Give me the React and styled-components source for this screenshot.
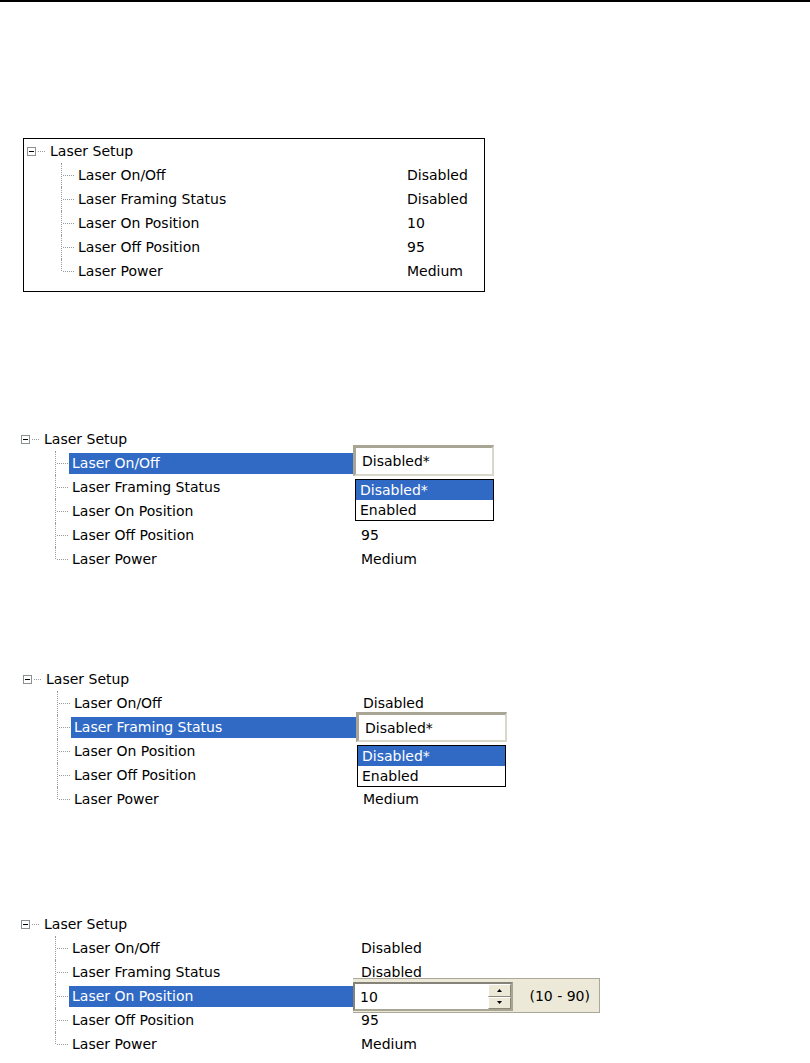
import React from "react";
import styled, { createGlobalStyle } from "styled-components";

const GlobalStyle = createGlobalStyle`
    html, body {
        margin: 0;
        padding: 0;
        background: #ffffff;
    }
    body {
        font-family: "DejaVu Sans", Verdana, sans-serif;
        font-size: 14px;
        color: #000000;
    }
`;

const Page = styled.div`
    width: 810px;
    min-height: 1063px;
    box-sizing: border-box;
    border-top: 2px solid #000000;
    display: flex;
    flex-direction: column;
    align-items: flex-start;
`;

const Section = styled.section`
    margin-top: ${({ $top }) => $top}px;
    margin-left: ${({ $left }) => $left}px;
`;

const FramedSection = styled(Section)`
    width: 462px;
    box-sizing: border-box;
    border: 1px solid #000000;
    padding: 1px 0 8px 3px;
`;

const HeaderRow = styled.div`
    display: flex;
    align-items: center;
    height: 23px;
`;

const MinusBox = styled.span`
    position: relative;
    width: 9px;
    height: 9px;
    box-sizing: border-box;
    border: 1px solid #8a8f92;
    background: #ffffff;

    &::after {
        content: "";
        position: absolute;
        left: 1px;
        top: 3px;
        width: 5px;
        height: 1px;
        background: #000000;
    }
`;

const HeaderDots = styled.span`
    width: 7px;
    margin-left: 2px;
    border-top: 1px dotted #9a9a9a;
`;

const HeaderLabel = styled.span`
    margin-left: 5px;
    line-height: 23px;
`;

const Children = styled.div`
    display: flex;
    flex-direction: column;
`;

const ChildRow = styled.div`
    display: grid;
    grid-template-columns: 48px ${({ $valueAt }) => $valueAt - 48}px 1fr;
    align-items: center;
    height: 24px;
`;

const Connector = styled.span`
    position: relative;
    align-self: stretch;

    &::before {
        content: "";
        position: absolute;
        left: 34px;
        top: 0;
        bottom: ${({ $last }) => ($last ? "12px" : "0")};
        border-left: 1px dotted #9a9a9a;
    }

    &::after {
        content: "";
        position: absolute;
        left: 36px;
        width: 11px;
        top: 12px;
        border-top: 1px dotted #9a9a9a;
    }
`;

const NameCell = styled.span`
    height: 21px;
    line-height: 21px;
    padding-left: 3px;
    white-space: nowrap;
    background: ${({ $selected }) => ($selected ? "#316ac5" : "transparent")};
    color: ${({ $selected }) => ($selected ? "#ffffff" : "#000000")};
`;

const ValueCell = styled.span`
    position: relative;
    height: 24px;
    line-height: 24px;
    padding-left: 7px;
    white-space: nowrap;
`;

/* combo box editor */
const ComboEdit = styled.div`
    position: absolute;
    z-index: 2;
    top: ${({ $top }) => $top}px;
    left: ${({ $left }) => $left}px;
    width: ${({ $w }) => $w}px;
    height: ${({ $h }) => $h}px;
    box-sizing: border-box;
    background: #ffffff;
    border-style: solid;
    border-width: 3px 2px 2px 3px;
    border-color: #a8a595 #d9d6ca #d9d6ca #a8a595;
    padding-left: 6px;
    display: flex;
    align-items: center;
    line-height: normal;
`;

const DropList = styled.ul`
    position: absolute;
    z-index: 2;
    top: ${({ $top }) => $top}px;
    left: ${({ $left }) => $left}px;
    width: ${({ $w }) => $w}px;
    box-sizing: border-box;
    margin: 0;
    padding: 0;
    list-style: none;
    border: 1px solid #000000;
    background: #ffffff;
`;

const DropItem = styled.li`
    height: 20px;
    line-height: 20px;
    padding-left: 4px;
    background: ${({ $selected }) => ($selected ? "#316ac5" : "transparent")};
    color: ${({ $selected }) => ($selected ? "#ffffff" : "#000000")};
`;

/* spin editor */
const SpinFrame = styled.div`
    position: absolute;
    z-index: 2;
    top: -6px;
    left: -1px;
    width: 247px;
    height: 35px;
    box-sizing: border-box;
    background: #ece9d8;
    border: 1px solid #aca899;
    border-left: none;
    padding-top: 3px;
    display: flex;
    align-items: flex-start;
    line-height: normal;
`;

const SpinEdit = styled.div`
    width: 160px;
    height: 29px;
    box-sizing: border-box;
    background: #ffffff;
    border: 2px solid;
    border-color: #85827a #a8a595 #a8a595 #85827a;
    padding-left: 5px;
    display: flex;
    align-items: center;
`;

const SpinText = styled.span`
    flex: 1;
`;

const SpinButtons = styled.div`
    width: 23px;
    height: 25px;
    display: flex;
    flex-direction: column;
`;

const SpinButton = styled.span`
    flex: 1;
    box-sizing: border-box;
    background: #ece9d8;
    border: 1px solid;
    border-color: #ffffff #8b8878 #8b8878 #ffffff;
    display: flex;
    align-items: center;
    justify-content: center;
`;

const RangeLabel = styled.span`
    flex: 1;
    text-align: right;
    padding-right: 9px;
    line-height: 29px;
`;

const Arrow = ({ down }) => (
    <svg width="5" height="3" viewBox="0 0 5 3">
        <path d={down ? "M0 0 H5 L2.5 3 Z" : "M0 3 H5 L2.5 0 Z"} fill="#000" />
    </svg>
);

const ITEMS = [
    { name: "Laser On/Off", value: "Disabled" },
    { name: "Laser Framing Status", value: "Disabled" },
    { name: "Laser On Position", value: "10" },
    { name: "Laser Off Position", value: "95" },
    { name: "Laser Power", value: "Medium" },
];

function ComboEditor({ edit, list }) {
    return (
        <>
            <ComboEdit $top={edit.top} $left={edit.left} $w={edit.w} $h={edit.h}>
                Disabled*
            </ComboEdit>
            <DropList $top={list.top} $left={list.left} $w={list.w}>
                <DropItem $selected>Disabled*</DropItem>
                <DropItem>Enabled</DropItem>
            </DropList>
        </>
    );
}

function SpinEditor() {
    return (
        <SpinFrame>
            <SpinEdit>
                <SpinText>10</SpinText>
                <SpinButtons>
                    <SpinButton><Arrow /></SpinButton>
                    <SpinButton><Arrow down /></SpinButton>
                </SpinButtons>
            </SpinEdit>
            <RangeLabel>(10 - 90)</RangeLabel>
        </SpinFrame>
    );
}

// covered = how many rows below the selected one the open list hides
function LaserTree({ valueAt = 333, selected = -1, covered = 0, editor = null }) {
    return (
        <div>
            <HeaderRow>
                <MinusBox />
                <HeaderDots />
                <HeaderLabel>Laser Setup</HeaderLabel>
            </HeaderRow>
            <Children>
                {ITEMS.map((item, i) => {
                    const isSel = i === selected;
                    const hidden = selected >= 0 && i > selected && i <= selected + covered;
                    return (
                        <ChildRow key={item.name} $valueAt={valueAt}>
                            <Connector $last={i === ITEMS.length - 1} />
                            <NameCell $selected={isSel}>{item.name}</NameCell>
                            <ValueCell>
                                {isSel ? editor : hidden ? null : item.value}
                            </ValueCell>
                        </ChildRow>
                    );
                })}
            </Children>
        </div>
    );
}

export default function App() {
    return (
        <>
            <GlobalStyle />
            <Page>
                <FramedSection $top={136} $left={23}>
                    <LaserTree valueAt={373} />
                </FramedSection>

                <Section $top={136} $left={21}>
                    <LaserTree
                        selected={0}
                        covered={2}
                        editor={
                            <ComboEditor
                                edit={{ top: -6, left: -1, w: 141, h: 31 }}
                                list={{ top: 28, left: 1, w: 139 }}
                            />
                        }
                    />
                </Section>

                <Section $top={97} $left={23}>
                    <LaserTree
                        selected={1}
                        covered={2}
                        editor={
                            <ComboEditor
                                edit={{ top: -3, left: 0, w: 151, h: 30 }}
                                list={{ top: 30, left: 1, w: 149 }}
                            />
                        }
                    />
                </Section>

                <Section $top={102} $left={21}>
                    <LaserTree selected={2} editor={<SpinEditor />} />
                </Section>
            </Page>
        </>
    );
}
